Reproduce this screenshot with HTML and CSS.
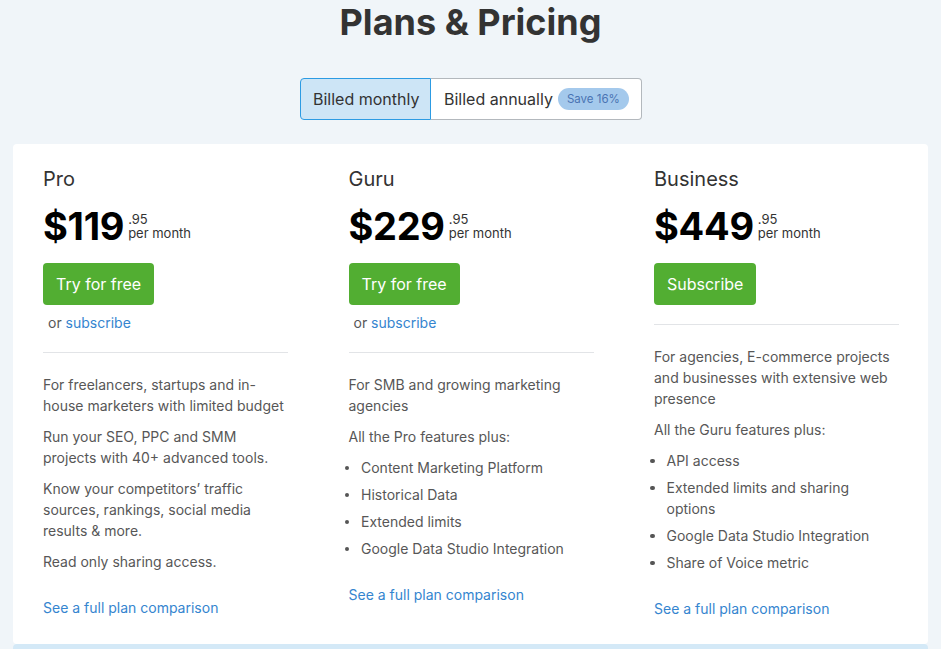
FILE: index.html
```html
<!DOCTYPE html>
<html lang="en">
<head>
<meta charset="utf-8">
<title>Plans &amp; Pricing</title>
<link rel="stylesheet" href="styles.css">
</head>
<body>
<h1 class="title">Plans &amp; Pricing</h1>
<div class="toggle-wrap">
  <div class="toggle">
    <button class="seg seg-active">Billed monthly</button>
    <button class="seg seg-annual">Billed annually <span class="badge">Save 16%</span></button>
  </div>
</div>
<section class="card">
  <div class="plan">
    <div class="plan-name">Pro</div>
    <div class="price"><span class="amount">$119</span><span class="small"><span>.95</span><span>per month</span></span></div>
    <a class="btn">Try for free</a>
    <div class="or">or <a class="link">subscribe</a></div>
    <hr class="divider">
    <div class="desc">
      <p>For freelancers, startups and in-house marketers with limited budget</p>
      <p>Run your SEO, PPC and SMM projects with 40+ advanced tools.</p>
      <p>Know your competitors’ traffic sources, rankings, social media results &amp; more.</p>
      <p>Read only sharing access.</p>
    </div>
    <a class="link compare">See a full plan comparison</a>
  </div>
  <div class="plan">
    <div class="plan-name">Guru</div>
    <div class="price"><span class="amount">$229</span><span class="small"><span>.95</span><span>per month</span></span></div>
    <a class="btn">Try for free</a>
    <div class="or">or <a class="link">subscribe</a></div>
    <hr class="divider">
    <div class="desc">
      <p>For SMB and growing marketing agencies</p>
      <p>All the Pro features plus:</p>
      <ul class="features">
        <li>Content Marketing Platform</li>
        <li>Historical Data</li>
        <li>Extended limits</li>
        <li>Google Data Studio Integration</li>
      </ul>
    </div>
    <a class="link compare">See a full plan comparison</a>
  </div>
  <div class="plan">
    <div class="plan-name">Business</div>
    <div class="price"><span class="amount">$449</span><span class="small"><span>.95</span><span>per month</span></span></div>
    <a class="btn">Subscribe</a>
    <hr class="divider divider-biz">
    <div class="desc">
      <p>For agencies, E-commerce projects and businesses with extensive web presence</p>
      <p>All the Guru features plus:</p>
      <ul class="features">
        <li>API access</li>
        <li>Extended limits and sharing options</li>
        <li>Google Data Studio Integration</li>
        <li>Share of Voice metric</li>
      </ul>
    </div>
    <a class="link compare">See a full plan comparison</a>
  </div>
</section>
<div class="next-band"></div>
</body>
</html>
```
FILE: styles.css
```css
* { box-sizing: border-box; }
html, body { margin: 0; padding: 0; }
body {
  background: #f0f5f9;
  font-family: Inter, "Noto Sans", "Liberation Sans", sans-serif;
  color: #575757;
  width: 941px;
  height: 649px;
  overflow: hidden;
}
.title {
  margin: 0;
  text-align: center;
  font-size: 36px;
  line-height: 44px;
  font-weight: 700;
  color: #333;
}
.toggle-wrap {
  display: flex;
  justify-content: center;
  margin-top: 34px;
  padding-left: 1px;
}
.toggle {
  display: flex;
  height: 42px;
}
.seg {
  font-family: inherit;
  font-size: 16px;
  color: #333;
  background: #fff;
  border: 1px solid #b3b8bd;
  margin: 0;
  display: flex;
  align-items: center;
  white-space: nowrap;
  cursor: pointer;
}
.seg-active {
  background: #cde5f6;
  border-color: #2c9be3;
  border-radius: 4px 0 0 4px;
  width: 131px;
  padding: 0 0 0 12px;
}
.seg-annual {
  border-left: none;
  border-radius: 0 4px 4px 0;
  width: 211px;
  padding: 0 12px 0 13px;
  gap: 5px;
}
.badge {
  display: inline-flex;
  align-items: center;
  flex: none;
  height: 22px;
  padding: 0 9px;
  border-radius: 11px;
  background: #a4c9ec;
  color: #4a74b3;
  font-size: 11.5px;
  white-space: nowrap;
}
.card {
  margin: 24px 13px 0 13px;
  background: #fff;
  border-radius: 4px;
  padding: 23px 29px 25px 30px;
  display: grid;
  grid-template-columns: repeat(3, 245px);
  column-gap: 60.5px;
  align-items: start;
}
.plan { display: flex; flex-direction: column; align-items: flex-start; }
.plan-name {
  font-size: 20px;
  line-height: 24px;
  color: #333;
}
.price {
  display: flex;
  align-items: flex-start;
  margin-top: 12px;
  color: #000;
}
.amount {
  font-size: 38px;
  line-height: 46px;
  font-weight: 700;
  letter-spacing: -0.3px;
}
.small {
  display: flex;
  flex-direction: column;
  margin-top: 9px;
  margin-left: 4px;
  font-size: 13px;
  line-height: 14px;
  color: #333;
}
.btn {
  display: inline-flex;
  align-items: center;
  height: 42px;
  margin-top: 14px;
  padding: 0 13px;
  background: #52ae32;
  color: #fff;
  font-size: 16px;
  border-radius: 4px;
  cursor: pointer;
}
.or {
  margin-top: 7px;
  padding-left: 5px;
  font-size: 14px;
  line-height: 21px;
}
.link { color: #3585cf; cursor: pointer; }
.divider {
  align-self: stretch;
  border: 0;
  border-top: 1px solid #e2e4e7;
  margin: 19px 0 0 0;
  height: 0;
}
.divider-biz { margin-top: 19px; }
.desc {
  margin-top: 21px;
  font-size: 14px;
  line-height: 21px;
  display: flex;
  flex-direction: column;
  gap: 10px;
}
.desc p { margin: 0; }
.features {
  list-style: none;
  margin: 0;
  padding: 0;
  display: flex;
  flex-direction: column;
  gap: 6px;
}
.features li {
  position: relative;
  padding-left: 12.5px;
}
.features li::before {
  content: "";
  position: absolute;
  left: -4px;
  top: 8.5px;
  width: 4.5px;
  height: 4.5px;
  border-radius: 50%;
  background: #555;
}
.compare {
  margin-top: 25px;
  font-size: 14px;
  line-height: 21px;
}
.next-band {
  margin: 0 13px;
  height: 6px;
  background: #d4e9f7;
  border-radius: 4px 4px 0 0;
}
```
